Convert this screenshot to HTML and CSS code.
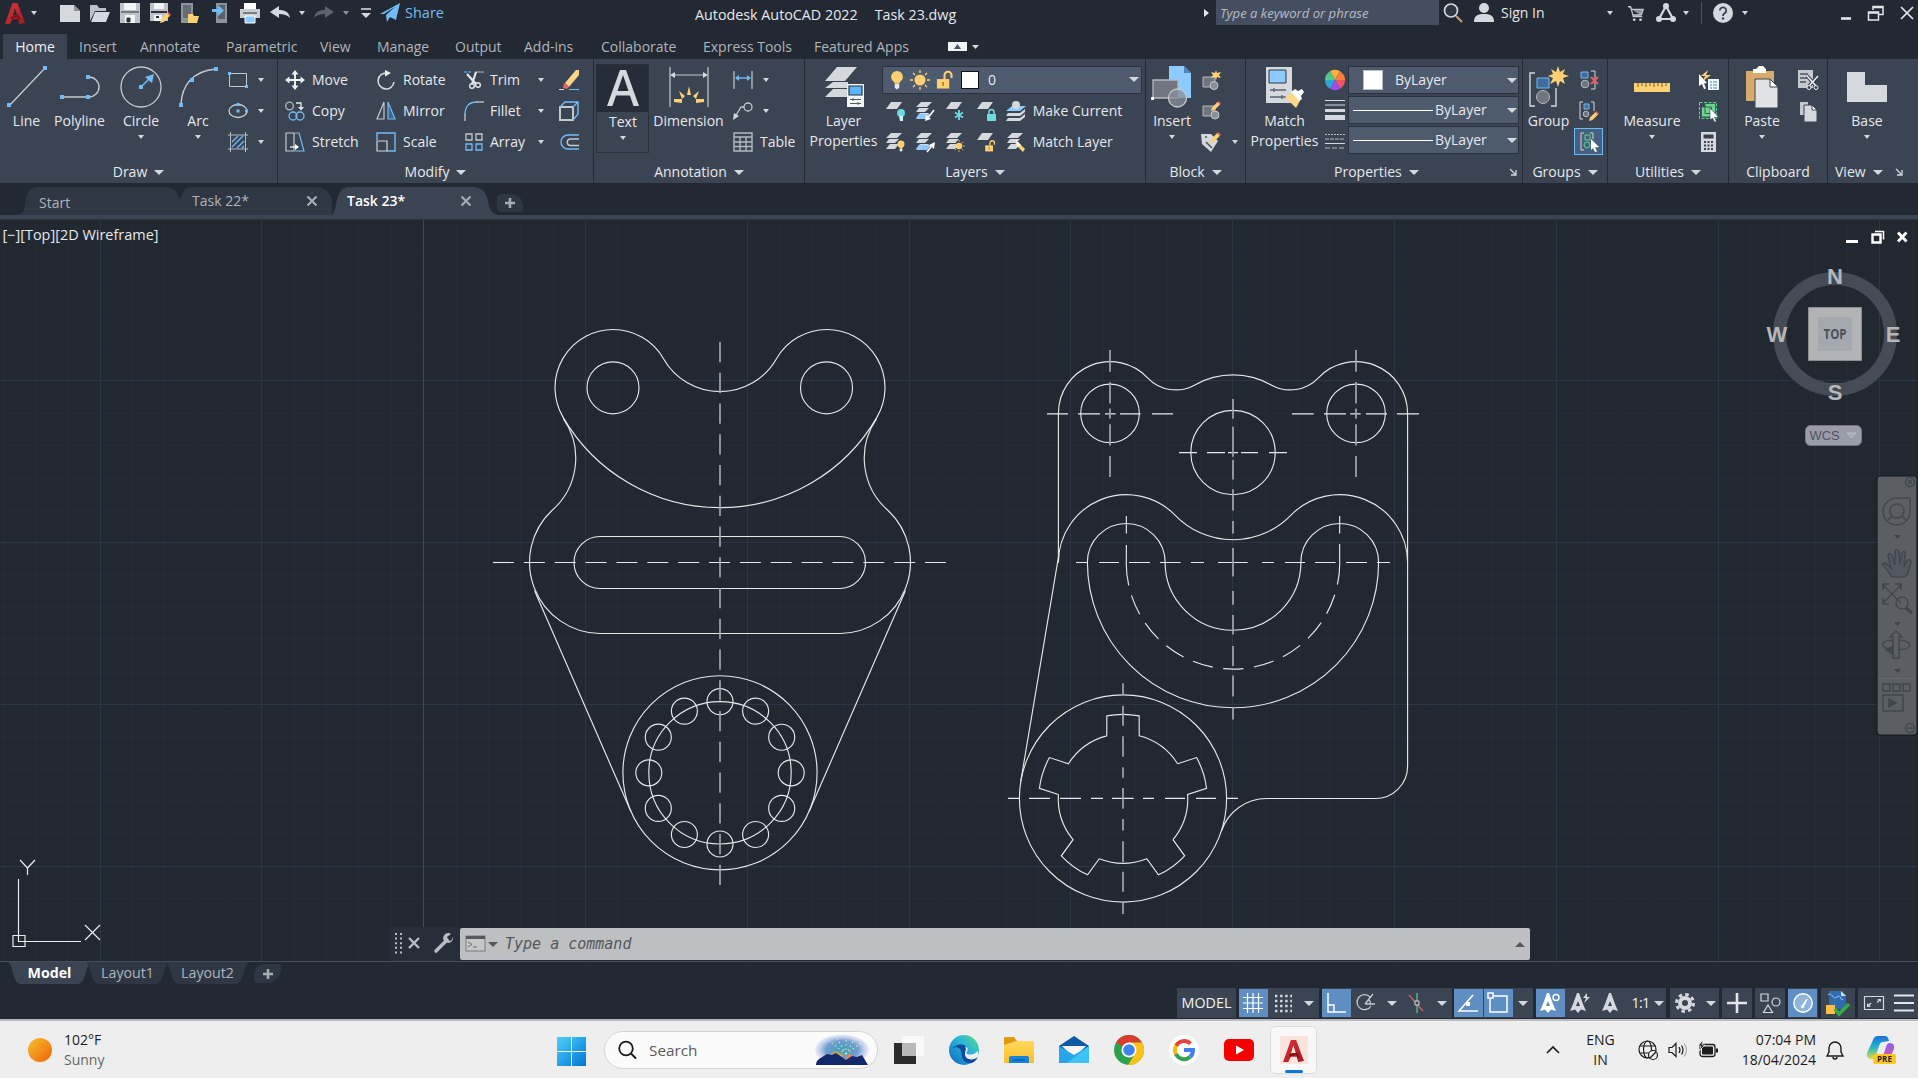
FILE: index.html
```html
<!DOCTYPE html>
<html lang="en">
<head>
<meta charset="utf-8">
<title>Autodesk AutoCAD 2022 - Task 23.dwg</title>
<link rel="stylesheet" href="styles.css">
</head>
<body>
<svg class="defs" width="0" height="0">
  <defs>
    <linearGradient id="sun" x1="0" y1="0" x2="1" y2="1"><stop offset="0" stop-color="#f2c230"/><stop offset="1" stop-color="#f26207"/></linearGradient>
    <linearGradient id="red" x1="0" y1="0" x2="1" y2="1"><stop offset="0" stop-color="#e0343a"/><stop offset="1" stop-color="#a01a22"/></linearGradient>
    <linearGradient id="win" x1="0" y1="0" x2="1" y2="1"><stop offset="0" stop-color="#4fd0fb"/><stop offset="1" stop-color="#0074d6"/></linearGradient>
    <linearGradient id="edge" x1="1" y1="0" x2="0" y2="1"><stop offset="0" stop-color="#5fe07a"/><stop offset=".4" stop-color="#2bb7d8"/><stop offset="1" stop-color="#0b66c2"/></linearGradient>
    <linearGradient id="fold" x1="0" y1="0" x2="0" y2="1"><stop offset="0" stop-color="#ffd95f"/><stop offset="1" stop-color="#fdbf28"/></linearGradient>
    <linearGradient id="cop1" x1="0" y1="0" x2="0" y2="1"><stop offset="0" stop-color="#1b6fe0"/><stop offset=".5" stop-color="#25b8c8"/><stop offset="1" stop-color="#e8d836"/></linearGradient>
    <linearGradient id="cop2" x1="0" y1="0" x2="0" y2="1"><stop offset="0" stop-color="#8a5cf0"/><stop offset="1" stop-color="#f0608a"/></linearGradient>
    <radialGradient id="sky"><stop offset="0" stop-color="#3f9fae"/><stop offset=".6" stop-color="#6f9fd0"/><stop offset="1" stop-color="#a9b4e8" stop-opacity=".2"/></radialGradient>
    <symbol id="sheets" viewBox="0 0 20 20"><path d="M6 1h11l-5 5H1zM5 7h9l-4 4H1l3-4zM5 12h9l-4 5H1l3-4z" fill="#d5d8dc"/></symbol>
    <symbol id="sheet" viewBox="0 0 20 20"><path d="M6 1h11l-5 7H1z" fill="#d5d8dc"/></symbol>
    <symbol id="unlock" viewBox="0 0 20 20"><path d="M2 9h13v10H2z" fill="#fdd074"/><path d="M10 9V5a3.6 3.6 0 0 1 7.4 0v3" fill="none" stroke="#fdd074" stroke-width="2.2"/><path d="M8.5 12v4" stroke="#8d6a1c" stroke-width="1.4"/></symbol>
    <symbol id="bulb" viewBox="0 0 14 22"><circle cx="7" cy="7.500" r="6.500" fill="#fdd074"/><path d="M3 10h8l-1.500 5h-5z" fill="#fdd074"/><path d="M4.500 15.500h5v4l-2.500 2-2.500-2z" fill="#e9ebee"/></symbol>
    <symbol id="sunny" viewBox="0 0 20 20"><circle cx="10" cy="10" r="5.500" fill="#fdd074"/><path d="M10 0v3M10 17v3M0 10h3M17 10h3M3 3l2 2M15 15l2 2M17 3l-2 2M3 17l2-2" stroke="#fdd074" stroke-width="1.300"/></symbol>
    <symbol id="pencil" viewBox="0 0 10 10"><path d="M0 10l1-3.500L6.500 1l2.500 2.500L3.500 9z" fill="#fdd074"/><path d="M6.500 1l1-1L10 2.500l-1 1z" fill="#ef5f5f"/></symbol>
    <symbol id="dwgA" viewBox="0 0 20 22"><path d="M0 22L7.500 1h5L20 21l-5.500 1-1.500-5H7.500L5 22zM9.800 6l-2 7.500h4.400z" fill="url(#red)"/><path d="M6 16l7-2 2 4" stroke="#7d1219" stroke-width="2" fill="none"/></symbol>
    <symbol id="compassA" viewBox="0 0 20 20"><path d="M9 0h2l4 11 3 7-5-1.500L10 20l-3-3.500L2 18l3-7zM10 8l-2 5h4z" fill="currentColor" fill-rule="evenodd"/></symbol>
  </defs>
</svg>

<header class="titlebar">
  <div class="quick">
    <svg width="20" height="22"><use href="#dwgA"/></svg>
    <i class="caret"></i>
    <svg viewBox="0 0 20 20"><path d="M0 2h14l6 6v11H0z" fill="#d5d8dc"/><path d="M14 2l6 6h-6z" fill="#8d929b"/></svg>
    <svg viewBox="0 0 20 20"><path d="M0 2h7l2 3h7v3H5L0 18z" fill="#bfc3c9"/><path d="M5 9h15l-4 10H1z" fill="#d5d8dc"/></svg>
    <svg viewBox="0 0 20 20"><path d="M0 0h20v20H0z" fill="#bfc3c9"/><path d="M4 0h12v7H4zM5 12h10v8H5z" fill="#f3f4f5"/><path d="M1 9h18M7 15h3v4H7z" stroke="#2b323d" fill="#2b323d"/></svg>
    <svg viewBox="0 0 20 20"><path d="M0 0h18v18H0z" fill="#bfc3c9"/><path d="M4 0h10v6H4zM4 12h8v6H4z" fill="#f3f4f5"/><path d="M1 9h16M6 14h3" stroke="#2b323d" stroke-width="2"/><use href="#pencil" x="10" y="9" width="11" height="11"/></svg>
    <svg viewBox="0 0 20 20"><path d="M1 0h12v20H1z" fill="#8d929b"/><path d="M3 2h8v13H3z" fill="#666c76"/><path d="M8 11h5l1 2h5l-2 7H8z" fill="#fdd074"/></svg>
    <svg viewBox="0 0 20 20"><path d="M6 0h11v20H6z" fill="#8d929b"/><path d="M8 2h7v14H8z" fill="#5b616b"/><path d="M2 6h6V2l6 5.500L8 13V9H2z" fill="#72bcf5"/></svg>
    <svg viewBox="0 0 20 20"><path d="M4 0h12v6H4z" fill="#fff"/><path d="M0 6h20v9H0z" fill="#c9ccd1"/><path d="M3 10h14" stroke="#2b323d"/><path d="M5 13h10v7H5z" fill="#8ccaff" stroke="#fff"/></svg>
    <svg viewBox="0 0 20 20"><path d="M0 9l9-6v4c6 0 10 2 11 8-3-3-6-4-11-4v4z" fill="#d5d8dc"/></svg>
    <i class="caret"></i>
    <svg viewBox="0 0 20 20"><path d="M20 9l-9-6v4C5 7 1 9 0 15c3-3 6-4 11-4v4z" fill="#5c626d"/></svg>
    <i class="caret dim"></i>
    <svg viewBox="0 0 20 20"><path d="M5 6h10" stroke="#d5d8dc" stroke-width="1.600"/><path d="M5 10h10l-5 5z" fill="#d5d8dc"/></svg>
    <svg viewBox="0 0 20 20"><path d="M0 11L20 0l-4 17-6-3-3 5-1-7 9-8-11 7z" fill="#72bcf5"/></svg>
    <span class="share">Share</span>
  </div>
  <div class="doc"><span>Autodesk AutoCAD 2022</span><span>Task 23.dwg</span></div>
  <i class="caret right"></i>
  <div class="find">Type a keyword or phrase</div>
  <div class="account">
    <svg viewBox="0 0 20 20"><circle cx="8" cy="7.500" r="6.500" fill="#2f3743" stroke="#d5d8dc" stroke-width="1.700"/><path d="M13 13l6 6" stroke="#c9a070" stroke-width="2"/></svg>
    <svg viewBox="0 0 20 20"><circle cx="10" cy="5" r="5" fill="#d5d8dc"/><path d="M0 19c0-6 3-8 10-8s10 2 10 8z" fill="#d5d8dc"/></svg>
    <span>Sign In</span>
    <i class="caret"></i>
    <svg viewBox="0 0 20 20"><path d="M1 3h3l3 11h10M5 6h13l-2 6H7" fill="#8d929b" stroke="#c5c9ce" stroke-width="1.400"/><circle cx="8" cy="17.500" r="1.500" fill="#d5d8dc"/><circle cx="15" cy="17.500" r="1.500" fill="#d5d8dc"/></svg>
    <svg viewBox="0 0 20 20"><path d="M10 3L3 16h14z" fill="none" stroke="#d5d8dc" stroke-width="2.200"/><g fill="#d5d8dc"><circle cx="10" cy="3" r="3"/><circle cx="3" cy="16" r="3"/><circle cx="17" cy="16" r="3"/></g></svg>
    <i class="caret"></i>
    <b class="rule"></b>
    <svg viewBox="0 0 20 20"><circle cx="10" cy="10" r="10" fill="#d5d8dc"/><path d="M6.800 7.500a3.200 3.200 0 1 1 4.800 2.800c-1.300.8-1.600 1.300-1.600 2.600" fill="none" stroke="#38404d" stroke-width="1.800"/><circle cx="10" cy="15.500" r="1.200" fill="#38404d"/></svg>
    <i class="caret"></i>
    <svg viewBox="0 0 20 20"><path d="M5 15.500h10" stroke="#e4e6e9" stroke-width="2.600"/></svg>
    <svg viewBox="0 0 20 20"><path d="M7 7V3.500h10v8h-4M2.500 9h10v8h-10zM2.500 10h10M7 4.500h10" fill="none" stroke="#e4e6e9" stroke-width="1.500"/></svg>
    <svg viewBox="0 0 20 20"><path d="M4 4l12 12M16 4L4 16" stroke="#e4e6e9" stroke-width="1.700"/></svg>
  </div>
</header>

<nav class="menu">
  <span class="on">Home</span><span>Insert</span><span>Annotate</span><span>Parametric</span><span>View</span><span>Manage</span><span>Output</span><span>Add-ins</span><span>Collaborate</span><span>Express Tools</span><span>Featured Apps</span>
  <svg width="34" height="10"><path d="M0 0h19v9H0z" fill="#f1f2f4"/><path d="M6 7l3.500-5L13 7z" fill="#4d535e"/><path d="M24 3h7l-3.500 4z" fill="#d5d8dc"/></svg>
</nav>

<section class="ribbon">
  <div class="panel">
    <div class="body draw">
      <div class="big"><svg width="40" height="42"><path d="M2 40L38 2" stroke="#c5c9ce" stroke-width="1.300"/><path d="M0 37h4v4H0zM36 0h4v4h-4z" fill="#72bcf5"/></svg><span>Line</span></div>
      <div class="big"><svg width="42" height="42"><path d="M3 31h27a10 10 0 0 0 0-20" fill="none" stroke="#c5c9ce" stroke-width="1.400"/><path d="M1 29h4v4H1zM27 29h4v4h-4zM27 9h4v4h-4z" fill="#72bcf5"/></svg><span>Polyline</span></div>
      <div class="big"><svg width="42" height="42"><circle cx="21" cy="21" r="20" fill="none" stroke="#c5c9ce" stroke-width="1.300"/><path d="M20 22L31 11" stroke="#72bcf5" stroke-width="1.400"/><path d="M34 8l-2 9-7-6zM19 19h4v4h-4z" fill="#72bcf5"/></svg><span>Circle</span><i class="caret"></i></div>
      <div class="big"><svg width="42" height="42"><path d="M4 38C5 20 15 5 39 3" fill="none" stroke="#c5c9ce" stroke-width="1.400"/><path d="M2 37h4v4H2zM13 12h4v4h-4zM37 1h4v4h-4z" fill="#72bcf5"/></svg><span>Arc</span><i class="caret"></i></div>
      <div class="rows tools">
        <div><svg viewBox="0 0 20 20"><path d="M1.500 3.500h17v13h-17z" fill="none" stroke="#c5c9ce"/><path d="M0 2h3v3H0zM17 15h3v3h-3z" fill="#72bcf5"/></svg><i class="caret"></i></div>
        <div><svg viewBox="0 0 20 20"><ellipse cx="10" cy="10" rx="9" ry="6.500" fill="none" stroke="#c5c9ce" stroke-width="1.300"/><path d="M8.500 2h3v3h-3zM8.500 8.500h3v3h-3zM17 8.500h3v3h-3z" fill="#72bcf5"/></svg><i class="caret"></i></div>
        <div><svg viewBox="0 0 20 20"><path d="M0 3h20M0 17h20M2.500 0v20M17.500 0v20" stroke="#b5b9bf"/><path d="M4 10l6-6M4 15L15 4M9 16l7-7M14 16l2-2" stroke="#72bcf5" stroke-width="1.400"/></svg><i class="caret"></i></div>
      </div>
    </div>
    <footer>Draw<i class="caret lg"></i></footer>
  </div>

  <div class="panel">
    <div class="body modify">
      <div><svg viewBox="0 0 20 20"><path d="M10 2v16M2 10h16" stroke="#f1f2f4" stroke-width="2"/><path d="M10 0l3.500 4.500h-7zM10 20l3.500-4.500h-7zM0 10l4.500-3.500v7zM20 10l-4.500-3.500v7z" fill="#f1f2f4"/></svg>Move</div>
      <div><svg viewBox="0 0 20 20"><path d="M11 3a8 8 0 1 0 7 9" fill="none" stroke="#d5d8dc" stroke-width="1.600"/><path d="M9 0l6 3-6 3.500z" fill="#f1f2f4"/></svg>Rotate</div>
      <div><svg viewBox="0 0 20 20"><path d="M0 2h8" stroke="#72bcf5" stroke-dasharray="3 1"/><path d="M11 2h9" stroke="#b5b9bf"/><path d="M3 4l9 10M12 2l-4 12" stroke="#e4e6e9" stroke-width="2.200"/><circle cx="8" cy="16" r="2.300" fill="none" stroke="#e4e6e9" stroke-width="1.400"/><circle cx="14" cy="15" r="2.300" fill="none" stroke="#e4e6e9" stroke-width="1.400"/></svg>Trim<i class="caret"></i></div>
      <div><svg viewBox="0 0 20 20"><path d="M6 13L17 0h3v5L10 17z" fill="#fdd58a"/><path d="M5 13l5 4-2 2-4-1z" fill="#ef5f5f"/><path d="M0 19.500h5" stroke="#d5d8dc"/><path d="M10 19.500h10" stroke="#72bcf5"/></svg></div>
      <div><svg viewBox="0 0 20 20"><circle cx="4.500" cy="5" r="3.800" fill="none" stroke="#b5b9bf" stroke-width="1.300"/><path d="M11 2h5v5" fill="none" stroke="#e4e6e9" stroke-width="1.300"/><path d="M13 6h6l-3 3.500z" fill="#e4e6e9"/><circle cx="8" cy="15" r="4" fill="none" stroke="#72bcf5" stroke-width="1.300"/><circle cx="15" cy="15" r="4" fill="none" stroke="#72bcf5" stroke-width="1.300"/></svg>Copy</div>
      <div><svg viewBox="0 0 20 20"><path d="M8 1v17H1z" fill="none" stroke="#c5c9ce" stroke-width="1.200"/><path d="M12 1v17h7z" fill="#41638a" stroke="#72bcf5" stroke-width="1.200"/></svg>Mirror</div>
      <div><svg viewBox="0 0 20 20"><path d="M1 20v-7" stroke="#c5c9ce" stroke-width="1.300"/><path d="M1 14C1 5 5 1 13 1" fill="none" stroke="#72bcf5" stroke-width="1.300"/><path d="M12 1h8" stroke="#c5c9ce" stroke-width="1.300"/></svg>Fillet<i class="caret"></i></div>
      <div><svg viewBox="0 0 20 20"><path d="M1 6h13v13H1z" fill="none" stroke="#c5c9ce" stroke-width="2"/><path d="M1 6l5-5h13v12l-5 6M14 6l5-5" fill="none" stroke="#72bcf5" stroke-width="1.400"/></svg></div>
      <div><svg viewBox="0 0 20 20"><path d="M1 1h8v18H1z" fill="none" stroke="#c5c9ce" stroke-width="1.200"/><path d="M10 1h4l5 18h-9" fill="none" stroke="#72bcf5" stroke-width="1.200"/><path d="M5 15h7" stroke="#fff" stroke-width="1.200"/><path d="M10 12l4 3-4 3z" fill="#fff"/></svg>Stretch</div>
      <div><svg viewBox="0 0 20 20"><path d="M1 8V1h18v18h-8" fill="none" stroke="#72bcf5" stroke-width="1.400"/><path d="M1 9h10v10H1z" fill="none" stroke="#d5d8dc" stroke-width="1.200"/></svg>Scale</div>
      <div><svg viewBox="0 0 20 20"><path d="M2 2h6v6H2zM12 2h6v6h-6z" fill="none" stroke="#c5c9ce" stroke-width="1.300"/><path d="M2 12h6v6H2zM12 12h6v6h-6z" fill="none" stroke="#72bcf5" stroke-width="1.300"/></svg>Array<i class="caret"></i></div>
      <div><svg viewBox="0 0 20 20"><path d="M20 3H9a6.700 6.700 0 0 0 0 14h11" fill="none" stroke="#72bcf5" stroke-width="1.400"/><path d="M20 7h-9a3.300 3.300 0 0 0 0 6.500h9" fill="none" stroke="#c5c9ce" stroke-width="1.400"/></svg></div>
    </div>
    <footer>Modify<i class="caret lg"></i></footer>
  </div>

  <div class="panel">
    <div class="body annot">
      <div class="textbtn"><div><svg width="34" height="38"><path d="M1 37L14 1h6l13 36h-5.500l-3.600-10.500H10L6.400 37zM11.500 22h11L17 6z" fill="#d5d8dc" fill-rule="evenodd"/></svg></div><span>Text</span><i class="caret"></i></div>
      <div class="big"><svg width="40" height="42"><path d="M1 1v40M39 1v40M3 9h34" stroke="#c5c9ce" stroke-width="1.200"/><path d="M1 9l5-3v6zM39 9l-5-3v6z" fill="#d5d8dc"/><path d="M20 20l2 9h-4zM10 25l6 5-3 3zM30 25l-6 5 3 3zM5 33h8v4l-8-1zM35 33h-8v4l8-1z" fill="#fdd074"/></svg><span>Dimension</span></div>
      <div class="rows tools">
        <div><svg viewBox="0 0 20 20"><path d="M1 1v18M19 1v18" stroke="#c5c9ce" stroke-width="1.200"/><path d="M3 8h14" stroke="#72bcf5" stroke-width="1.400"/><path d="M2 8l4-3v6zM18 8l-4-3v6z" fill="#72bcf5"/></svg><i class="caret"></i></div>
        <div><svg viewBox="0 0 20 20"><circle cx="15" cy="6" r="4" fill="none" stroke="#c5c9ce" stroke-width="1.300"/><path d="M11 6H8L2 16" fill="none" stroke="#c5c9ce" stroke-width="1.300"/><path d="M0 19l1-7 5 3z" fill="#d5d8dc"/></svg><i class="caret"></i></div>
        <div class="lab"><svg viewBox="0 0 20 20"><path d="M1 1h18v18H1z" fill="none" stroke="#b5b9bf" stroke-width="1.400"/><path d="M1 5h18M1 10h18M1 14.500h18M7 5v14M13 5v14" stroke="#b5b9bf" stroke-width="1.400"/></svg>Table</div>
      </div>
    </div>
    <footer>Annotation<i class="caret lg"></i></footer>
  </div>

  <div class="panel">
    <div class="body layers">
      <div class="big two"><svg width="42" height="42"><path d="M14 1h20L22 15H2zM10 16h15v6H2zM10 23h14v8H2z" fill="#d5d8dc"/><path d="M24 18h17v23H24z" fill="#f3f4f5"/><path d="M26 20h13v9H26z" fill="#5eb6fa" stroke="#27303c" stroke-width="1.200"/><path d="M27 33.500h11M27 37.500h11M30 32v3M35 36v3" stroke="#555c67"/></svg><span>Layer<br>Properties</span></div>
      <div class="layergrid">
        <div class="combo"><svg width="14" height="20"><use href="#bulb"/></svg><svg width="20" height="20"><use href="#sunny"/></svg><svg width="19" height="20"><use href="#unlock"/></svg><b class="swatch"></b><span>0</span><i class="caret lg"></i></div>
        <div class="lrow">
          <svg viewBox="0 0 20 20"><use href="#sheet"/><circle cx="16" cy="12" r="4" fill="#6fd8e0"/><path d="M14 15h4v5h-3z" fill="#c6f0f2"/></svg>
          <svg viewBox="0 0 20 20"><use href="#sheets"/><path d="M4 13h12l-4 5H1z" fill="#8ccaff"/><path d="M19 9l-6 8" stroke="#fff" stroke-width="1.500"/><path d="M10 20l1-6 5 4z" fill="#fff"/></svg>
          <svg viewBox="0 0 20 20"><use href="#sheet"/><path d="M14 9v10M10 11.500l8 5M18 11.500l-8 5" stroke="#6fd8e0" stroke-width="1.800"/></svg>
          <svg viewBox="0 0 20 20"><use href="#sheet"/><path d="M11 13h9v7h-9z" fill="#6fd8e0"/><path d="M13 13v-2a2.500 2.500 0 0 1 5 0v2" fill="none" stroke="#6fd8e0" stroke-width="1.500"/></svg>
          <svg viewBox="0 0 20 20"><path d="M6 5h14l-6 5H0z" fill="#8ccaff"/><circle cx="10" cy="4" r="4" fill="#d5d8dc"/><path d="M2 12h12l5-4v3l-5 4H0zM2 17h12l5-4v3l-5 4H0z" fill="#d5d8dc"/></svg>
          <span>Make Current</span>
        </div>
        <div class="lrow">
          <svg viewBox="0 0 20 20"><use href="#sheets"/><use href="#bulb" x="12" y="8" width="8" height="12"/></svg>
          <svg viewBox="0 0 20 20"><use href="#sheets"/><path d="M4 13h12l-4 5H1z" fill="#8ccaff"/><path d="M12 20l6-8" stroke="#fff" stroke-width="1.500"/><path d="M20 10l-6 3 5 4z" fill="#fff"/></svg>
          <svg viewBox="0 0 20 20"><use href="#sheets"/><use href="#sunny" x="8" y="8" width="12" height="12"/></svg>
          <svg viewBox="0 0 20 20"><use href="#sheet"/><use href="#unlock" x="8" y="8" width="12" height="12"/></svg>
          <svg viewBox="0 0 20 20"><use href="#sheets"/><path d="M9 12l3-2 3 3 4 4-2 3z" fill="#fdd074"/><path d="M10 8l5 5-4 2z" fill="#fff"/></svg>
          <span>Match Layer</span>
        </div>
      </div>
    </div>
    <footer>Layers<i class="caret lg"></i></footer>
  </div>

  <div class="panel">
    <div class="body block">
      <div class="big"><svg width="42" height="42"><path d="M18 0h15l7 7v25H18z" fill="#8ccaff"/><path d="M33 0l7 7h-7z" fill="#4f86bd"/><path d="M2 14h25v18H2z" fill="#70757f" stroke="#b5b9bf" stroke-width="1.300"/><circle cx="26.500" cy="32" r="9" fill="#8a8f98" fill-opacity=".75" stroke="#c5c9ce" stroke-width="1.300"/><path d="M0 31h3v3H0z" fill="#fff"/></svg><span>Insert</span><i class="caret"></i></div>
      <div class="rows tools">
        <div><svg viewBox="0 0 20 20"><path d="M2 7h12v10H2z" fill="#70757f" stroke="#b5b9bf"/><circle cx="13" cy="15.500" r="4" fill="#8a8f98" stroke="#c5c9ce"/><path d="M15 0l1 3 4-1-2 3 2 3-4-1-1 3-1-3-4 1 2-3-2-3 4 1z" fill="#fdd074"/></svg></div>
        <div><svg viewBox="0 0 20 20"><path d="M2 5h12v10H2z" fill="#70757f" stroke="#b5b9bf"/><circle cx="14" cy="14" r="4" fill="#8a8f98" stroke="#c5c9ce"/><use href="#pencil" x="10" y="0" width="10" height="10"/></svg></div>
        <div><svg viewBox="0 0 20 20"><path d="M0 2h10l7 7-7 11L1 12z" fill="#d5d8dc"/><path d="M5 10l6 6M4 5h2" stroke="#4d535e" stroke-width="1.500"/><use href="#pencil" x="9" y="0" width="11" height="11"/></svg><i class="caret"></i></div>
      </div>
    </div>
    <footer>Block<i class="caret lg"></i></footer>
  </div>

  <div class="panel">
    <div class="body props">
      <div class="big two"><svg width="40" height="42"><path d="M1 1h26v36H1z" fill="#d5d8dc"/><path d="M4 4h17v13H4z" fill="#8ccaff" stroke="#2f3743"/><path d="M5 24h16M5 31h16M9 22v4M17 29v4" stroke="#5b616b" stroke-width="1.300"/><path d="M20 31l8-5 8 7-5 9z" fill="#fdd58a"/><path d="M26 26l4-3 3 2 4-2 2 3-3 4 1 3-3 2z" fill="#fff"/></svg><span>Match<br>Properties</span></div>
      <div class="propicons">
        <svg viewBox="0 0 20 20"><path d="M10 10L5 1.300a10 10 0 0 1 10 0z" fill="#f9b03f"/><path d="M10 10l5-8.700a10 10 0 0 1 5 8.700z" fill="#f5803f"/><path d="M10 10h10a10 10 0 0 1-5 8.700z" fill="#ee5468"/><path d="M10 10l5 8.700a10 10 0 0 1-10 0z" fill="#9a4cf0"/><path d="M10 10L5 18.700A10 10 0 0 1 0 10z" fill="#2aa6d8"/><path d="M10 10H0a10 10 0 0 1 5-8.700z" fill="#4fc98a"/></svg>
        <svg viewBox="0 0 20 20"><path d="M0 .5h20M0 5h20" stroke="#d5d8dc"/><path d="M0 10.500h20" stroke="#d5d8dc" stroke-width="3"/><path d="M0 17.500h20" stroke="#d5d8dc" stroke-width="5"/></svg>
        <svg viewBox="0 0 20 20"><path d="M0 3.500h20" stroke="#b5b9bf" stroke-dasharray="2 1"/><path d="M0 8h20" stroke="#b5b9bf" stroke-dasharray="4 1"/><path d="M0 12.500h20" stroke="#d5d8dc"/><path d="M0 17h20" stroke="#b5b9bf" stroke-dasharray="5 2"/></svg>
      </div>
      <div class="combos">
        <div class="combo c1"><b class="swatch"></b><span>ByLayer</span><i class="caret lg"></i></div>
        <div class="combo c2"><b class="ln"></b><span>ByLayer</span><i class="caret lg"></i></div>
        <div class="combo c2"><b class="ln"></b><span>ByLayer</span><i class="caret lg"></i></div>
      </div>
    </div>
    <footer class="launch"><i></i><span>Properties<i class="caret lg"></i></span><svg width="8" height="8"><path d="M1 1l5 5M7 2v5H2" fill="none" stroke="#d5d8dc" stroke-width="1.300"/></svg></footer>
  </div>

  <div class="panel">
    <div class="body groups">
      <div class="big"><svg width="42" height="42"><path d="M7 7H2v33h5M23 40h5V22" fill="none" stroke="#d5d8dc" stroke-width="1.400"/><path d="M9 12h12v10H9z" fill="#3e6c9c" stroke="#72bcf5"/><circle cx="15" cy="31" r="6.500" fill="#70757f" stroke="#b5b9bf"/><path d="M30 0l2 6 5-3-2 5 6 2-6 2 2 6-5-3-2 6-2-6-6 3 3-6-5-2 5-2-2-5 5 3z" fill="#fdd074"/></svg><span>Group</span></div>
      <div class="rows tools">
        <div><svg viewBox="0 0 20 20"><path d="M12 1h4v18h-4" fill="none" stroke="#d5d8dc"/><path d="M2 2h7v6H2z" fill="#3e6c9c" stroke="#72bcf5"/><circle cx="6" cy="14" r="3.800" fill="#70757f" stroke="#b5b9bf"/><path d="M12 7l7 7M19 7l-7 7" stroke="#ef5f5f" stroke-width="2"/></svg></div>
        <div><svg viewBox="0 0 20 20"><path d="M4 1H1v17h3M12 1h3v9" fill="none" stroke="#d5d8dc"/><path d="M5 3h5v5H5z" fill="#3e6c9c" stroke="#72bcf5"/><circle cx="7" cy="13" r="2.800" fill="#70757f" stroke="#b5b9bf"/><use href="#pencil" x="10" y="10" width="10" height="10"/></svg></div>
        <div class="sel"><svg viewBox="0 0 20 20"><path d="M5 1H2v17h3M11 1h3v6" fill="none" stroke="#d5d8dc"/><path d="M6 3h5v5H6z" fill="none" stroke="#5fd38a"/><circle cx="8" cy="13" r="3" fill="none" stroke="#5fd38a"/><path d="M12 7l8 8-4 .5 2 4-2 .5-2-4-2 2z" fill="#fff"/></svg></div>
      </div>
    </div>
    <footer>Groups<i class="caret lg"></i></footer>
  </div>

  <div class="panel">
    <div class="body utils">
      <div class="big"><svg width="42" height="42"><path d="M3 17h36v9H3z" fill="#fdd074"/><path d="M7 17v4M11 17v3M15 17v4M19 17v3M23 17v4M27 17v3M31 17v4M35 17v3" stroke="#7c6128"/></svg><span>Measure</span><i class="caret"></i></div>
      <div class="rows tools">
        <div><svg viewBox="0 0 20 20"><path d="M9 0L2 6h4L4 11l8-6H7z" fill="#fdd074"/><path d="M9 9h11v11H9z" fill="#f3f4f5"/><path d="M11 12h2M11 15h2M11 18h2M14 12h4M14 15h4M14 18h4" stroke="#3d8fd6"/><path d="M0 4l8 9-3 .5 2 5-2 .5-2-5-3 2z" fill="#fff"/></svg></div>
        <div><svg viewBox="0 0 20 20"><path d="M.5 1.500h17v16H.5z" fill="none" stroke="#5fd38a" stroke-dasharray="3 1.500"/><path d="M6 2.500h10.500v10H6zM2.500 6h10v10h-10z" fill="#6fd394" stroke="#2d6b47"/><path d="M11 7l8.500 9-4 .5 2 4-2 .5-2-4-2.500 2z" fill="#fff" stroke="#3b4453" stroke-width=".6"/></svg></div>
        <div><svg viewBox="0 0 20 20"><path d="M2 0h15v20H2z" fill="#d5d8dc"/><path d="M4.500 2.500h10v4h-10zM5 9h2v2H5zM8.500 9h2v2h-2zM12 9h2v2h-2zM5 12.500h2v2H5zM8.500 12.500h2v2h-2zM12 12.500h2v2h-2zM5 16h2v2H5zM8.500 16h2v2h-2zM12 16h2v2h-2z" fill="#3a414d"/></svg></div>
      </div>
    </div>
    <footer>Utilities<i class="caret lg"></i></footer>
  </div>

  <div class="panel">
    <div class="body clip">
      <div class="big"><svg width="34" height="42"><path d="M1 5h28v30H1z" fill="#d9aa6e"/><path d="M8 7V3h3l3-3 4 0 3 3v4z" fill="#fff"/><path d="M10 13h15l8 8v21H10z" fill="#e0e2e5" stroke="#3b4453"/><path d="M25 13l8 8h-8z" fill="#fff" stroke="#3b4453"/></svg><span>Paste</span><i class="caret"></i></div>
      <div class="rows tools">
        <div><svg viewBox="0 0 20 20"><path d="M0 0h15v18H0z" fill="#c5c9ce"/><path d="M2 4h8M2 8h8M2 12h6" stroke="#4d535e" stroke-width="1.300"/><path d="M9 6l9 10M20 6l-9 10" stroke="#3b4453" stroke-width="3.500"/><path d="M9 6l9 10M20 6l-9 10" stroke="#f1f2f4" stroke-width="1.500"/><circle cx="11" cy="17.500" r="2" fill="#3b4453" stroke="#f1f2f4"/><circle cx="18" cy="17.500" r="2" fill="#3b4453" stroke="#f1f2f4"/></svg></div>
        <div><svg viewBox="0 0 20 20"><path d="M2 1h8v13H2z" fill="#c5c9ce"/><path d="M6 4h8l5 5v12H6z" fill="#d5d8dc" stroke="#3b4453"/><path d="M14 4l5 5h-5z" fill="#fff" stroke="#3b4453"/></svg></div>
        <div></div>
      </div>
    </div>
    <footer>Clipboard</footer>
  </div>

  <div class="panel">
    <div class="body view">
      <div class="big"><svg width="40" height="42"><path d="M0 6h18v13h22v17H0z" fill="#d5d8dc"/></svg><span>Base</span><i class="caret"></i></div>
    </div>
    <footer class="viewfoot">View<i class="caret lg"></i><svg width="8" height="8"><path d="M1 1l5 5M7 2v5H2" fill="none" stroke="#d5d8dc" stroke-width="1.300"/></svg></footer>
  </div>
</section>

<nav class="filetabs">
  <div class="ft">Start</div>
  <div class="ft">Task 22*<svg width="12" height="12"><path d="M1.500 1.500l9 9M10.500 1.500l-9 9" stroke="#a7abb2" stroke-width="2.200"/></svg></div>
  <div class="ft on">Task 23*<svg width="12" height="12"><path d="M1.500 1.500l9 9M10.500 1.500l-9 9" stroke="#a7abb2" stroke-width="2.200"/></svg></div>
  <div class="plus"><svg width="12" height="12"><path d="M6 1v10M1 6h10" stroke="#a7abb2" stroke-width="2.600"/></svg></div>
</nav>

<main class="canvas">
  <svg class="sheet" viewBox="0 220 1918 741" width="1918" height="741">
    <!-- minor and major grid, drawn as very wide dashed strokes -->
    <g shape-rendering="crispEdges" fill="none">
      <path d="M2.500 590.500H1918" stroke="#252c37" stroke-width="741" stroke-dasharray="1 31.360"/>
      <path d="M959 251V961" stroke="#252c37" stroke-width="1918" stroke-dasharray="1 31.360"/>
      <path d="M99.500 590.500H1918" stroke="#2e3545" stroke-width="741" stroke-dasharray="1 160.800"/>
      <path d="M959 218.500V961" stroke="#2e3545" stroke-width="1918" stroke-dasharray="1 160.800"/>
      <path d="M423.500 220V961" stroke="#22602b"/>
    </g>
    <g class="ink">
      <!-- left bracket -->
      <path d="M562.700 416.600A58.200 58.200 0 0 1 613 329.500A58.200 58.200 0 0 1 663.500 358.700A65 65 0 0 0 776.500 358.700A58.200 58.200 0 0 1 827 329.500A58.200 58.200 0 0 1 877.300 416.600A181.400 181.400 0 0 1 562.700 416.600"/>
      <circle cx="613" cy="387.800" r="26"/><circle cx="826.500" cy="387.800" r="26"/>
      <path d="M563.400 418.600A69.500 69.500 0 0 1 551.900 510.500A71.200 71.200 0 0 0 600 633.500H840A71.200 71.200 0 0 0 888.100 510.500A69.500 69.500 0 0 1 876.600 418.600"/>
      <path d="M600 536.500H839.500A26 26 0 0 1 839.500 588.500H600A26 26 0 0 1 600 536.500"/>
      <path d="M534.600 590.800L630.900 811.600M905.400 590.800L809.100 811.600"/>
      <circle cx="720" cy="772.800" r="97.100"/><circle cx="720" cy="772.800" r="71.200"/>
      <g id="holes"><circle cx="720" cy="701.600" r="13"/><circle cx="755.600" cy="711.100" r="13"/><circle cx="781.700" cy="737.200" r="13"/><circle cx="791.200" cy="772.800" r="13"/><circle cx="781.700" cy="808.400" r="13"/><circle cx="755.600" cy="834.500" r="13"/></g>
      <use href="#holes" transform="rotate(180 720 772.800)"/>
      <path d="M493 562.500H946" stroke-dasharray="21 9.860"/>
      <path d="M720 342V886" stroke-dasharray="20.300 10.450" class="soft"/>
      <!-- right bracket -->
      <path d="M1058.400 562.500V413.400A51.700 51.700 0 0 1 1147.600 377.800A38.800 38.800 0 0 0 1194.800 384.900A77.700 77.700 0 0 1 1271.200 384.900A38.800 38.800 0 0 0 1318.400 377.800A51.700 51.700 0 0 1 1407.600 413.400V766.200A32.400 32.400 0 0 1 1375.200 798.500H1266.700A47.700 47.700 0 0 0 1221.400 831.100"/>
      <circle cx="1110" cy="413.400" r="29.300"/><circle cx="1356" cy="413.400" r="29.300"/><circle cx="1233" cy="452.500" r="42.200"/>
      <path d="M1058.400 562.300A68 68 0 0 1 1175 515.100A80.600 80.600 0 0 0 1291 515.100A68 68 0 0 1 1407.600 562.300"/>
      <path d="M1087.400 562.300A38.850 38.850 0 0 1 1165.100 562.300A67.900 67.900 0 0 0 1300.900 562.300A38.850 38.850 0 0 1 1378.600 562.300A145.600 145.600 0 0 1 1087.400 562.300"/>
      <path d="M1126.200 562.300A106.800 106.800 0 0 0 1339.800 562.300" stroke-dasharray="23.200 10.400 20.600 10.400 20.600 10.400 20.600 10.400 20.600 10.400 20.600 10.400 20.600 10.400 20.600 10.400 20.600 10.400 20.600 10.400 23.200 0"/>
      <path d="M1058.800 555L1020.700 781.500"/>
      <circle cx="1123" cy="798.500" r="103.600"/>
      <g transform="translate(1123 798.500)">
        <g id="notch"><path d="M-16.200 -62.700V-82.600A84.200 84.200 0 0 1 16.200 -82.600V-62.700A64.800 64.800 0 0 1 54.600 -34.800"/></g>
        <use href="#notch" transform="rotate(72)"/><use href="#notch" transform="rotate(144)"/><use href="#notch" transform="rotate(216)"/><use href="#notch" transform="rotate(288)"/>
      </g>
      <!-- centre lines of the right bracket -->
      <g transform="translate(980 330) scale(.33333 .38265)">
        <path d="M201 219h63M294 219h66M375 219h32M420 219h62M516 219h63M936 219h65M1032 219h66M1111 219h31M1158 219h63M1251 219h66M597 320.500h54M681 320.500h54M744 320.500h30M783 320.500h51M867 320.500h54"/>
        <path d="M288 607.500h35M357 607.500h60M447 607.500h63M540 607.500h62M633 607.500h39M714 607.500h89M846 607.500h36M915 607.500h60M1005 607.500h62M1098 607.500h63M1191 607.500h39"/>
        <path d="M84 1224h35M147 1224h63M240 1224h63M333 1224h36M396 1224h65M489 1224h33M555 1224h60M648 1224h60M738 1224h36M439 486v46M439 562v46M1079 486v46M1079 559v49"/>
        <path class="soft" d="M390 52v57M390 136v56M390 205v27M390 246v56M390 329v55M1128 52v57M1128 136v56M1128 205v27M1128 246v56M1128 329v55M759 180v52M759 253v78M759 340v51M759 416v56M759 499v33M759 570v74M759 682v36M759 745v51M759 826v52M759 903v55M759 986v32"/>
        <path class="soft" d="M429 923v31M429 982v52M429 1062v53M429 1143v27M429 1197v54M429 1278v30M429 1336v54M429 1416v52M429 1496v30"/>
      </g>
    </g>
    <!-- UCS icon -->
    <path d="M18.500 879V941.500H81M13 935.500h12v11H13zM20 860l7.500 8 7.500-8M27.500 868v7M85 925l15 15M100 925l-15 15" fill="none" stroke="#e8eaec" stroke-width="1.200"/>
    <text x="2.500" y="240" class="vplabel" textLength="156" lengthAdjust="spacingAndGlyphs">[−][Top][2D Wireframe]</text>
    <g fill="none" stroke="#fff"><path d="M1846 241.500h12" stroke-width="3"/><path d="M1872.500 234.500h8v8h-8z" stroke-width="2.400"/><path d="M1875 231.500h8.500v8" stroke-width="1.500"/><path d="M1898 232.500l8.500 9M1906.500 232.500l-8.500 9" stroke-width="2.800"/></g>
    <!-- view cube -->
    <circle cx="1835" cy="334" r="55.500" fill="none" stroke="#464c55" stroke-width="13"/>
    <path d="M1808.500 307.500h53v53h-53z" fill="#b2b3b4" stroke="#8c8e91"/><path d="M1818 317h34v34h-34z" fill="#a3a9ae"/>
    <g class="nesw" text-anchor="middle"><text x="1835" y="284">N</text><text x="1835" y="400">S</text><text x="1777" y="342">W</text><text x="1893" y="342">E</text></g>
    <text class="top" x="1835" y="339" text-anchor="middle" textLength="23" lengthAdjust="spacingAndGlyphs">TOP</text>
    <rect x="1805.500" y="425.500" width="56" height="20" rx="5" fill="#9a9ca9" stroke="#74778a"/>
    <text class="wcs" x="1809.500" y="440" textLength="30" lengthAdjust="spacingAndGlyphs">WCS</text>
    <path d="M1847 433h9l-4.500 5z" fill="#a9abb6" stroke="#c6c8d0" stroke-width=".8"/>
    <!-- navigation bar -->
    <rect x="1877" y="476" width="40" height="259" rx="3" fill="#5b5f63" stroke="#14191f" stroke-width="1.200"/>
    <g fill="none" stroke="#42474f" stroke-width="1.500">
      <circle cx="1910" cy="482" r="4.500"/><path d="M1908 480l4 4M1912 480l-4 4"/>
      <path d="M1897 498h13v13a13.500 13.500 0 1 1-13-13z"/><circle cx="1897" cy="511" r="7"/><path d="M1892 516l-5 5M1902 516l5 5"/>
      <path d="M1892 577c-4-6-6-9-9-12-1-2 2-3 4-1l4 4-3-12c0-3 3-3 4 0l3 9v-13c0-3 3-3 4 0l1 13 2-12c1-2 4-2 3 1l-1 13 3-6c2-3 4-1 4 1l-4 13-3 2z" fill="#545961"/>
      <path d="M1883 585l18 18M1901 585l-18 18M1883 590v-6h6M1895 584h6v6M1883 598v6h6"/><circle cx="1902" cy="603" r="6"/><path d="M1906 608l6 5" stroke-width="3"/>
      <path d="M1896 631l6 6h-3v21h-6v-21h-3z"/><path d="M1893 640c-14 1-14 8 1 10M1900 640c14 2 13 9-2 10"/><path d="M1893 646v8l-7-4z" fill="#42474f"/>
      <path d="M1879 678.500h36" stroke="#666a6e" stroke-width="1"/>
      <path d="M1883 684h7v7h-7zM1893 684h7v7h-7zM1903 684h7v7h-7zM1883 695h20v16h-20z"/><path d="M1889 699l7 4-7 4z" fill="#42474f"/>
      <circle cx="1910" cy="728" r="4.500"/><path d="M1907 728h6"/>
    </g>
    <path d="M1894 535h7l-3.500 4zM1894 622h7l-3.500 4zM1894 669h7l-3.500 4z" fill="#3e434b"/>
  </svg>
  <div class="command">
    <div class="handle"><svg width="70" height="34"><path d="M6 6v22M11 6v22" stroke="#b9bcc1" stroke-width="2" stroke-dasharray="2 2.600"/><path d="M19 11l10 10M29 11l-10 10" stroke="#b9bcc1" stroke-width="2.400"/><path d="M46 24L57 13" stroke="#b9bcc1" stroke-width="3.600" stroke-linecap="round"/><path d="M61 7l-4 3 1 3 3 1 2-4a5 5 0 1 1-2-3z" fill="#b9bcc1"/></svg></div>
    <div class="prompt"><svg width="34" height="18"><rect x="1" y="1" width="19" height="15" fill="#c6c7c9" stroke="#777b80"/><path d="M1 1h19v3H1z" fill="#55595f"/><path d="M3 7l4 2.500-4 2.500M8 12h4" fill="none" stroke="#6a6e74"/><path d="M23 7h10l-5 5z" fill="#55595f"/></svg><span>Type a command</span><i></i></div>
  </div>
</main>

<nav class="layouts">
  <div class="lt on">Model</div><div class="lt">Layout1</div><div class="lt">Layout2</div>
  <div class="plus"><svg width="12" height="12"><path d="M6 1v10M1 6h10" stroke="#a7abb2" stroke-width="2.600"/></svg></div>
</nav>

<section class="status">
  <div class="g m">MODEL</div>
  <div class="g s1"><b class="on"><svg viewBox="0 0 20 20"><path d="M0 4.500h20M0 10h20M0 15.500h20M4.500 0v20M10 0v20M15.500 0v20" stroke="#fff" stroke-width="1.200"/></svg></b><b><svg viewBox="0 0 20 20"><g fill="none" stroke="#d5d8dc" stroke-width="2.400" stroke-dasharray="2.400 2.700"><path d="M2 3h17M2 8h17M2 13h17M2 18h17"/></g></svg></b><i class="caret lg"></i></div>
  <div class="g s2"><b class="on"><svg viewBox="0 0 20 20"><path d="M2 0v19h18M2 12h6v7" fill="none" stroke="#fff" stroke-width="1.500"/></svg></b><b><svg viewBox="0 0 20 20"><path d="M15 13a7.500 7.500 0 1 1-1-9M9 11h10M9 11L17 1M13 7c1 1 1.500 2 1.500 4" fill="none" stroke="#c5c9ce" stroke-width="1.300"/></svg></b><i class="caret lg"></i><b><svg viewBox="0 0 20 20"><path d="M3 2l14 16" stroke="#cf6470" stroke-width="1.200"/><path d="M11 0v20" stroke="#5fd38a" stroke-width="1.200"/><path d="M9 8h4v4H9z" fill="#3b4453" stroke="#d5d8dc"/></svg></b><i class="caret lg"></i></div>
  <div class="g s3"><b class="on"><svg viewBox="0 0 20 20"><path d="M15 2L1 18h19" fill="none" stroke="#fff" stroke-width="1.500"/><path d="M8 9h4v4H8z" fill="#fff"/></svg></b><b class="on"><svg viewBox="0 0 20 20"><path d="M5 3h14v16H2V6M0 0h5v5H0z" fill="none" stroke="#fff" stroke-width="1.500"/></svg></b><i class="caret lg"></i></div>
  <div class="g s4"><b class="on"><svg viewBox="0 0 20 20"><use href="#compassA" x="-2"/><circle cx="16" cy="4.500" r="3" fill="none" stroke="#fff" stroke-width="1.400"/></svg></b><b><svg viewBox="0 0 20 20"><use href="#compassA" x="-2"/><path d="M17 0l-4 5h3l-2 5 6-6h-3z" fill="#d5d8dc"/></svg></b><b><svg viewBox="0 0 20 20"><use href="#compassA"/></svg></b><span>1:1</span><i class="caret lg"></i></div>
  <div class="g s5"><b><svg viewBox="0 0 20 20"><circle cx="10" cy="10" r="5" fill="none" stroke="#d5d8dc" stroke-width="4"/><circle cx="10" cy="10" r="8.500" fill="none" stroke="#d5d8dc" stroke-width="3" stroke-dasharray="3.500 3.176"/></svg></b><i class="caret lg"></i></div>
  <div class="g s6"><svg viewBox="0 0 20 20"><path d="M10 0v20M0 10h20" stroke="#e4e6e9" stroke-width="2.600"/></svg></div>
  <div class="g s6"><svg viewBox="0 0 20 20"><path d="M1 1h7v7H1zM8 12l4.500 7.500h-9z" fill="none" stroke="#d5d8dc" stroke-width="1.200"/><circle cx="16" cy="9" r="4" fill="none" stroke="#d5d8dc" stroke-width="1.200"/></svg></div>
  <div class="g s7"><b class="on"><svg viewBox="0 0 20 20"><circle cx="10" cy="10" r="9.200" fill="#8fb5dd" stroke="#fff" stroke-width="1.400"/><path d="M8 14l6-8-4 9z" stroke="#fff" fill="#fff"/></svg></b></div>
  <div class="g s8"><svg width="26" height="26"><path d="M4 1h12l5 5v13H4z" fill="#2f6cae"/><path d="M16 1l5 5h-5z" fill="#cfe2f5"/><path d="M3 5c4-4 5 6 9 2s4 6 6 2" fill="none" stroke="#9cc8ef"/><path d="M1 15h9v9H1z" fill="#fdbf4a"/><path d="M10 19l4 5 10-10" fill="none" stroke="#39a845" stroke-width="3.600"/></svg></div>
  <div class="g s9"><svg viewBox="0 0 20 20"><path d="M.5 3.500h19v13H.5z" fill="none" stroke="#d5d8dc" stroke-width="1.200"/><path d="M3 10v4h4l-1.500-1.500 2-2-1-1-2 2zM17 9V6h-4l1.500 1-2 2 1 1 2-2z" fill="#d5d8dc"/></svg><svg viewBox="0 0 20 20"><path d="M0 2.500h20M0 10h20M0 17.500h20" stroke="#e4e6e9" stroke-width="2.200"/></svg></div>
</section>

<footer class="taskbar">
  <svg class="sun" viewBox="0 0 24 24" width="24" height="24"><circle cx="12" cy="12" r="12" fill="url(#sun)"/></svg>
  <div class="weather"><span>102°F</span><span class="mut">Sunny</span></div>
  <svg class="start" width="29" height="29"><path d="M0 0h14v14H0zM15 0h14v14H15zM0 15h14v14H0zM15 15h14v14H15z" fill="url(#win)"/></svg>
  <div class="search"><svg width="20" height="20"><circle cx="8" cy="8.500" r="6.800" fill="none" stroke="#1c1c1c" stroke-width="1.800"/><path d="M13 13.500l5 5" stroke="#1c1c1c" stroke-width="2"/></svg><span>Search</span>
    <svg width="54" height="32" viewBox="0 0 54 32"><ellipse cx="27" cy="16" rx="27" ry="15.500" fill="url(#sky)"/><path d="M31 20L14 7M31 20L22 4M31 20V3M31 20L40 4M31 20L46 9" stroke="#f5edc0" stroke-width="1.200" stroke-dasharray="1.200 3"/><path d="M12 22l9-5 8 4-5 6z" fill="#c9a45c"/><path d="M30 25l5-6 6 7z" fill="#f08060"/><path d="M1 31q0-4 3-6l8-5 5 1 4-2 10 7 6-4 5 1 5-2 6 10z" fill="#14286c"/></svg>
  </div>
  <div class="apps">
    <svg viewBox="0 0 30 30"><path d="M0 8h22v21H0z" fill="#2b2b2b"/><path d="M8 1h22v20H8z" fill="#fafafa" fill-opacity=".9"/><path d="M8 8h14v13H8z" fill="#b9b9b9"/></svg>
    <svg viewBox="0 0 30 30"><circle cx="15" cy="15" r="15" fill="url(#edge)"/><path d="M29 22c-4 4-12 3-13-3-.5-3 3-4 1-7-2-4-11-3-14 2 3-3 8-2 9 2 1 6 1 12 9 12 3 0 6-2 8-6z" fill="#0c4a9e"/><path d="M16 12c4 0 3 4 1 6 4 3 9 1 12-2v6c-5 4-13 3-13-3 0-3 2-4 0-7z" fill="#eee"/></svg>
    <svg viewBox="0 0 30 30"><path d="M0 3q0-1 1-1h9l3 4v5H0z" fill="#dd9c0e"/><path d="M0 10l12-4h17q1 0 1 1v20q0 1-1 1H0z" fill="url(#fold)"/><path d="M5 28v-5q0-2 2-2h16q2 0 2 2v5z" fill="#1485d8"/><path d="M9 25h12" stroke="#0b5fa8" stroke-width="1.500"/></svg>
    <svg viewBox="0 0 30 30"><path d="M0 11L15 1l15 10v6H0z" fill="#0a5aa6"/><path d="M3 11h24l-12 12z" fill="#f5f7fa"/><path d="M0 11l15 9 15-9v17H0z" fill="#28a5ea"/><path d="M30 11v17H8z" fill="#3cc4f5"/><path d="M3 11h24l-12 8z" fill="#f5f7fa"/></svg>
    <svg viewBox="0 0 30 30"><circle cx="15" cy="15" r="15" fill="#2da14c"/><path d="M15 15L2 7.500A15 15 0 0 1 28 7.500H15z" fill="#dd3b2e"/><path d="M28 7.500A15 15 0 0 1 14 30l7.500-12L15 7.500z" fill="#fbc116"/><circle cx="15" cy="15" r="7.500" fill="#fff"/><circle cx="15" cy="15" r="5.800" fill="#3f83ee"/></svg>
    <svg viewBox="0 0 30 30"><circle cx="15" cy="15" r="15" fill="#fff"/><g fill="none" stroke-width="4"><path d="M21.500 8.700A9 9 0 0 0 7 11" stroke="#e64235"/><path d="M7.200 10.500a9 9 0 0 0 0 9" stroke="#fabb05"/><path d="M7 19a9 9 0 0 0 14 3" stroke="#34a351"/><path d="M15 15h9a9 9 0 0 1-3 7" stroke="#4180ee"/></g></svg>
    <svg viewBox="0 0 30 30"><rect y="4" width="30" height="22" rx="5" fill="#f80000"/><path d="M12 10.500l8 4.500-8 4.500z" fill="#fff"/></svg>
    <div class="active"><svg viewBox="0 0 30 30"><path d="M1 1h28v28H1z" fill="#fae4dc"/><use href="#dwgA" x="4" y="4" width="21" height="23"/></svg><i></i></div>
  </div>
  <div class="tray">
    <svg viewBox="0 0 20 20"><path d="M4 13l6-6 6 6" fill="none" stroke="#1c1c1c" stroke-width="1.700"/></svg>
    <div class="lang"><span>ENG</span><span>IN</span></div>
    <svg viewBox="0 0 20 20"><g fill="none" stroke="#1c1c1c" stroke-width="1.200"><circle cx="9.500" cy="9.500" r="8.500"/><ellipse cx="9.500" cy="9.500" rx="4" ry="8.500"/><path d="M2 6h15M2 13h9"/><circle cx="15" cy="15" r="4.500" fill="#eee"/><path d="M12 18l6-6"/></g></svg>
    <svg viewBox="0 0 20 20"><path d="M1 7.500h3l4-4v13l-4-4H1z" fill="none" stroke="#1c1c1c" stroke-width="1.200"/><path d="M11 7q2 3 0 6M13.500 5.500q3 4.500 0 9" fill="none" stroke="#1c1c1c" stroke-width="1.200"/><path d="M16 3.500q5 6.500 0 13" fill="none" stroke="#aaa" stroke-width="1.200"/></svg>
    <svg viewBox="0 0 20 20"><rect x="2" y="4.500" width="15" height="12" rx="2.500" fill="none" stroke="#1c1c1c" stroke-width="1.300"/><rect x="4" y="6.500" width="11" height="8" rx="1" fill="#1c1c1c"/><path d="M19 8.500v4" stroke="#1c1c1c" stroke-width="2"/><path d="M5 0L0 6h3l-2 5 6-6H4z" fill="#1c1c1c" stroke="#eee" stroke-width=".8"/></svg>
    <div class="clock"><span>07:04 PM</span><span>18/04/2024</span></div>
    <svg viewBox="0 0 20 20"><path d="M10 2a6 6 0 0 0-6 6v4l-2 4h16l-2-4V8a6 6 0 0 0-6-6zM8 17a2 2 0 0 0 4 0" fill="none" stroke="#1c1c1c" stroke-width="1.400"/></svg>
    <svg class="copilot" viewBox="0 0 30 30"><path d="M7 5q1-4 5-4h7q3 0 4 5l-6 1q-3 0-4 4l-3 9q-1 4-4 4-6 0-5-6z" fill="url(#cop1)"/><path d="M23 25q-1 4-5 4h-7q-3 0-3-3l5-1q3-1 4-4l3-9q1-4 4-4 5 0 4 6z" fill="url(#cop2)"/><rect x="7" y="19" width="23" height="10" rx="2" fill="#ffc81e"/><text x="18.500" y="27" text-anchor="middle">PRE</text></svg>
  </div>
</footer>
</body>
</html>
```
FILE: styles.css
```css
* { box-sizing: border-box; }
body {
  margin: 0;
  width: 1918px;
  height: 1078px;
  overflow: hidden;
  background: #222933;
  color: #e6e8eb;
  font: 14px/20px "Open Sans", "Noto Sans", sans-serif;
  white-space: nowrap;
  display: flex;
  flex-direction: column;
}
svg { display: block; flex: none; overflow: visible; }
svg.defs { position: absolute; }
i, b { font-style: normal; display: block; flex: none; }

.caret { width: 0; height: 0; border: 3.500px solid transparent; border-top: 4.500px solid #d5d8dc; border-bottom: 0; }
.caret.lg { border-width: 5px 5px 0; }
.caret.dim { border-top-color: #8d929b; }
.caret.right { border: 4.500px solid transparent; border-left: 5px solid #e6e8eb; border-right: 0; }

/* title bar */
.titlebar { flex: none; height: 34px; display: grid; grid-template-columns: 695px 509px 12px 223px 479px; align-items: start; }
.titlebar > .right { margin-top: 9px; }
.quick { height: 26px; padding-left: 5px; display: grid; grid-template-columns: 26px 29px 30px 30px 30px 30px 30px 30px 30px 29px 15px 29px 13px 24px 25px 60px; align-items: center; }
.quick svg:not([width]) { width: 20px; height: 20px; }
.share { color: #72bcf5; font-size: 14.500px; }
.doc { display: flex; gap: 17px; height: 30px; align-items: center; font-size: 14.300px; }
.find { height: 25px; padding-left: 4px; background: #454e60; color: #b7bcc6; font: italic 13.100px/26px "Open Sans", sans-serif; }
.account { height: 26px; padding-left: 4px; display: grid; grid-template-columns: 31px 27px 106px 20px 29px 27px 18px 12px 29px 94px 30px 31px 20px; align-items: center; }
.account svg { width: 20px; height: 20px; }
.account svg:nth-of-type(3) { width: 18px; }
.rule { width: 1px; height: 22px; background: #4a5468; }

/* menu tabs */
.menu { flex: none; height: 25px; padding-left: 3px; display: grid; grid-template-columns: 76px 61px 86px 94px 57px 78px 69px 77px 102px 111px 134px 40px; color: #b0b4ba; line-height: 25px; align-items: center; }
.menu .on { width: 64px; height: 25px; text-align: center; background: #3b4453; color: #eef0f2; }

/* ribbon */
.ribbon { flex: none; height: 124px; background: #3b4453; display: grid; grid-template-columns: 278px 316px 211px 341px 100px 277px 85px 121px 99px 90px; }
.panel { padding-top: 5px; border-right: 1px solid #242b35; height: 124px; }
.panel:last-child { border: 0; }
.body { height: 93px; display: flex; }
.panel > footer { height: 32px; padding-bottom: 2px; display: flex; gap: 7px; justify-content: center; align-items: center; line-height: 20px; }
.panel footer.launch { display: grid; grid-template-columns: 88px auto 1fr; gap: 0; padding: 0 5px 2px 0; }
.launch span { display: flex; align-items: center; gap: 7px; }
.launch svg { justify-self: end; }
.panel footer.viewfoot { justify-content: flex-start; padding-left: 7px; }
.viewfoot svg { margin-left: 5px; }
.big { display: flex; flex-direction: column; align-items: center; }
.big svg { margin-top: 2px; }
.big span { margin-top: 3px; text-align: center; line-height: 20px; }
.big .caret { margin-top: 4px; }
.rows { display: grid; grid-template-rows: repeat(3, 31px); }
.rows > div { display: flex; align-items: center; gap: 10px; }
.tools svg { width: 20px; height: 20px; }
.tools .lab { gap: 7px; }

.draw .big:nth-child(1), .draw .big:nth-child(2) { width: 53px; }
.draw .big:nth-child(3) { width: 70px; }
.draw .big:nth-child(4) { width: 44px; }
.draw .rows { padding-left: 8px; }
.modify { display: grid; grid-template-columns: 91px 88px 95px 20px; grid-template-rows: repeat(3, 31px); padding-left: 7px; }
.modify > div { display: flex; align-items: center; gap: 7px; }
.modify svg { width: 20px; height: 20px; }
.modify > div:nth-child(4n+3) { gap: 6px; }
.modify .caret { margin-left: auto; margin-right: 15px; }
.annot { padding-left: 2px; }
.textbtn { width: 53px; height: 89px; border: 1px solid #2a313c; display: flex; flex-direction: column; align-items: center; }
.textbtn div { width: 51px; height: 47px; background: #262d38; padding: 4px 9px; }
.textbtn span { margin-top: 0; padding-left: 1px; }
.textbtn .caret { margin-top: 4px; }
.annot .big { width: 79px; }
.annot .rows { padding-left: 5px; }
.layers .big { width: 77px; }
.layergrid { display: grid; grid-template-rows: 31px 31px 31px; align-items: center; }
.combo { width: 260px; height: 28px; background: #4e5a6e; border: 1px solid #2b3340; display: grid; align-items: center; }
.layers .combo { grid-template-columns: 20px 25px 25px 28px 141px 12px; padding-left: 7px; }
.layers .combo .swatch { margin-left: 1px; }
.swatch { width: 18px; height: 18px; background: #fff; border: 1px solid #10141a; }
.lrow { display: grid; grid-template-columns: repeat(4, 30.200px) 27px auto; align-items: center; padding-left: 3px; }
.lrow svg { width: 20px; height: 20px; }
.block .big { width: 52px; }
.block .rows { padding-left: 3px; }
.block .rows > div { gap: 11px; }
.props .big { width: 77px; }
.propicons { width: 25px; padding-left: 2px; display: grid; grid-template-rows: 30px 30px 31px; align-items: center; padding-top: 1px; }
.propicons svg { width: 20px; height: 20px; }
.combos { display: grid; grid-template-rows: repeat(3, 30px); align-items: center; padding-top: 1px; }
.props .combo { width: 171px; }
.combo.c1 { grid-template-columns: 32px 112px 12px; padding-left: 14px; }
.combo.c2 { grid-template-columns: 82px 72px 12px; padding-left: 4px; }
.c1 .swatch { border-color: #b8bcc3; width: 20px; height: 20px; }
.ln { width: 80px; height: 1px; background: #fff; }
.groups .big { width: 51px; }
.groups .rows > div { width: 29px; justify-content: center; }
.groups .sel { height: 27px; align-self: center; border: 1px solid #6cb8f2; background: #45607f; }
.utils .big { width: 88px; }
.utils .rows { padding-left: 3px; }
.clip .big { width: 66px; }
.clip .rows { padding-left: 3px; }
.view .big { width: 78px; }

/* drawing file tabs */
.filetabs { flex: none; height: 37px; padding: 4px 0 0 18px; display: flex; border-bottom: 5px solid #3b4453; }
.ft { height: 28px; display: flex; align-items: center; justify-content: space-between; background: #2f3744; color: #b0b4ba; padding-left: 21px; }
.filetabs .ft { padding-top: 3px; }
.ft:nth-child(1) { width: 162px; clip-path: path("M0 28C7 27 6 20 8 12C9 3 13 0 20 0H148Q160 1 162 14V28z"); }
.ft:nth-child(2) { width: 152px; padding: 0 14px 0 12px; clip-path: path("M0 28V12Q3 0 12 0H136Q150 1 152 14V28z"); }
.ft.on { width: 166px; padding: 0 26px 0 15px; background: #3b4453; color: #fff; font-weight: 600; clip-path: path("M0 28C6 24 2 2 16 0H142Q154 1 156 14C158 24 160 27 166 28z"); }
.plus { width: 26px; height: 18px; background: #2f3744; border-radius: 4px 12px 2px 4px; display: flex; align-items: center; justify-content: center; }
.filetabs .plus { margin: 7px 0 0 -1px; }

/* model space */
.canvas { flex: none; height: 741px; position: relative; background: #212830; }
.ink { fill: none; stroke: #e6e7e8; stroke-width: 1.150; }
.ink * { vector-effect: non-scaling-stroke; }
.ink .soft { stroke: #a3a6aa; stroke-width: 1.700; }
.vplabel { font: 14px "Open Sans", sans-serif; fill: #e6e8eb; }
.nesw { font: bold 22px "Liberation Sans", sans-serif; fill: #b5b7b9; }
.top { font: bold 14px "Open Sans", sans-serif; fill: #4a5058; }
.wcs { font: 13px "Liberation Sans", sans-serif; fill: #4f535e; }
.command { position: absolute; left: 390px; top: 707px; display: flex; align-items: center; }
.handle { width: 70px; height: 34px; background: #272e39; }
.prompt { width: 1070px; height: 32px; background: rgba(198, 199, 200, .95); border-radius: 2px; display: flex; align-items: center; padding: 0 5px 0 5px; color: #54585e; font: italic 15px "DejaVu Sans Mono", monospace; }
.prompt span { margin-left: 6px; }
.prompt i { margin-left: auto; border: 5px solid transparent; border-bottom-color: #55595f; border-top: 0; }

/* layout tabs */
.layouts { flex: none; height: 27px; padding-left: 8px; border-top: 1px solid #474e5a; display: flex; }
.lt { height: 22px; width: 83px; background: #2f3744; color: #b0b4ba; line-height: 22px; text-align: center; font-size: 14.200px; clip-path: path("M0 0H83C77 3 79 20 70 22H12C4 20 5 2 0 0z"); }
.lt:nth-child(2) { margin-left: -5px; }
.lt:nth-child(3) { margin-left: -3px; }
.lt.on { background: #3b4453; color: #fff; font-weight: 700; }
.layouts .plus { margin: 2px 0 0 5px; width: 27px; height: 19px; border-radius: 10px 3px 14px 3px; }

/* status bar */
.status { flex: none; height: 31px; padding-left: 1177px; display: flex; }
.g { height: 30px; background: #3b4453; display: flex; align-items: center; }
.g b { width: 30px; height: 28px; display: flex; align-items: center; justify-content: center; color: #d5d8dc; }
.g b.on { background: #5f8fc2; color: #fff; width: 29px; }
.g svg:not([width]) { width: 20px; height: 20px; }
.m { width: 59px; margin-right: 3px; justify-content: center; font-size: 14.300px; color: #f1f2f4; }
.s1 { width: 80px; margin-right: 3px; }
.s1 .caret { margin-left: 6px; }
.s2 { width: 130px; margin-right: 2px; }
.s2 .caret { margin: 0 4px 0 6px; }
.s3 { width: 79px; margin-right: 3px; gap: 1px; }
.s3 .caret { margin-left: 4px; }
.s4 { width: 131px; margin-right: 4px; }
.s4 span { margin: 0 4px 0 7px; font-size: 14.300px; letter-spacing: -.7px; color: #f1f2f4; }
.s5 { width: 49px; margin-right: 3px; }
.s5 .caret { margin-left: 6px; }
.s6 { width: 30px; margin-right: 3px; justify-content: center; }
.s7 { width: 30px; margin-right: 3px; }
.s8 { width: 34px; margin-right: 3px; justify-content: center; }
.s9 { width: 60px; padding-left: 6px; gap: 10px; }

/* taskbar */
.taskbar { flex: none; height: 59px; border-top: 2px solid #b9bbbe; background: #eee; color: #1c1c1c; display: flex; align-items: center; }
.taskbar .sun { margin-left: 28px; }
.weather { margin-left: 12px; width: 493px; display: flex; flex-direction: column; line-height: 20px; font-size: 14px; padding-top: 1px; }
.mut { color: #666; }
.start { margin-top: 3px; }
.search { margin: 1px 0 0 18px; width: 274px; height: 38px; border-radius: 19px; background: #fbfbfb; border: 1px solid #d5d5d5; display: flex; align-items: center; padding: 0 8px 0 13px; color: #5a5a5a; font-size: 15.300px; }
.search span { margin: 0 auto 0 11px; }
.apps { margin: 1px 0 0 16px; display: flex; gap: 25px; align-items: center; }
.apps svg { width: 30px; height: 30px; }
.active { width: 47px; height: 48px; margin-left: -9px; background: #f8f8f8; border: 1px solid #dcdcdc; border-radius: 5px; display: flex; flex-direction: column; align-items: center; padding-top: 8px; }
.active i { width: 18px; height: 3px; border-radius: 2px; background: #0b78d4; margin-top: 5px; }
.tray { margin-left: auto; padding-right: 22px; display: grid; grid-template-columns: 40px 55px 30px 30px 25px 93px 50px 30px; align-items: center; justify-items: start; font-size: 14px; line-height: 20px; }
.tray svg { width: 20px; height: 20px; }
.lang { width: 35px; text-align: center; display: flex; flex-direction: column; }
.clock { width: 83px; text-align: right; display: flex; flex-direction: column; justify-self: end; align-items: flex-end; }
.tray svg:nth-of-type(5) { margin-left: 9px; }
.tray .copilot { width: 30px; height: 30px; }
.copilot text { font: bold 8px "Open Sans", sans-serif; fill: #222; }
```
